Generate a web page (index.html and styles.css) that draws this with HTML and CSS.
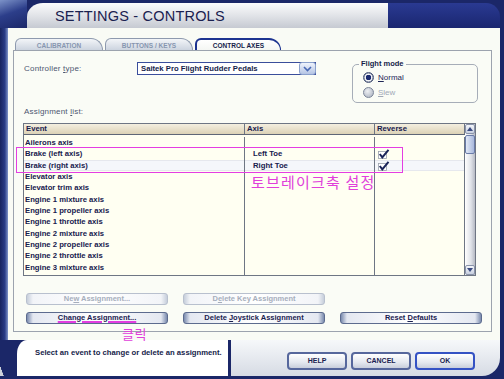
FILE: index.html
```html
<!DOCTYPE html>
<html lang="en">
<head>
    <meta charset="UTF-8">
    <title>Settings - Controls</title>
    <link rel="stylesheet" href="styles.css">
</head>
<body>
<div class="screen">

    <header class="head">
        <div class="head-left"></div>
        <div class="head-title"><h1>SETTINGS - CONTROLS</h1></div>
        <div class="head-right"></div>
    </header>

    <div class="middle">
        <div class="edge"></div>
        <main class="panel">
            <nav class="tabs">
                <div class="tab">CALIBRATION</div>
                <div class="tab">BUTTONS / KEYS</div>
                <div class="tab active">CONTROL AXES</div>
            </nav>

            <section class="box">
                <div class="top">
                    <label class="lbl ctl-lbl">Controller <u>t</u>ype:</label>
                    <div class="select">
                        <span>Saitek Pro Flight Rudder Pedals</span>
                        <div class="drop">
                            <svg width="9" height="6" viewBox="0 0 9 6"><path d="M1 1 L4.5 4.5 L8 1" fill="none" stroke="#4868b4" stroke-width="1.6"/></svg>
                        </div>
                    </div>
                    <div class="mode">
                        <span class="legend">Flight mode</span>
                        <div class="radio-row"><span class="radio on"></span><span><u>N</u>ormal</span></div>
                        <div class="radio-row dim"><span class="radio"></span><span><u>S</u>lew</span></div>
                    </div>
                </div>

                <div class="lbl list-lbl">Assignment <u>l</u>ist:</div>

                <div class="list">
                    <div class="list-main">
                        <div class="row head-row">
                            <div class="c">Event</div><div class="c">Axis</div><div class="c">Reverse</div>
                        </div>
                        <div class="rows">
                            <div class="row"><div class="c">Ailerons axis</div><div class="c"></div><div class="c"></div></div>
                            <div class="row"><div class="c">Brake (left axis)</div><div class="c ax">Left Toe</div><div class="c"><svg class="tick" width="12" height="10" viewBox="0 0 12 10"><rect x="0.5" y="2.5" width="8" height="7" fill="#fff" stroke="#9aa0ac" stroke-width="0.8"/><path d="M1.8 5 L4.3 8.3 L10.5 0.8" fill="none" stroke="#1a2458" stroke-width="2"/></svg></div></div>
                            <div class="row sel"><div class="c">Brake (right axis)</div><div class="c ax">Right Toe</div><div class="c"><svg class="tick" width="12" height="10" viewBox="0 0 12 10"><rect x="0.5" y="2.5" width="8" height="7" fill="#fff" stroke="#9aa0ac" stroke-width="0.8"/><path d="M1.8 5 L4.3 8.3 L10.5 0.8" fill="none" stroke="#1a2458" stroke-width="2"/></svg></div></div>
                            <div class="row"><div class="c">Elevator axis</div><div class="c"></div><div class="c"></div></div>
                            <div class="row"><div class="c">Elevator trim axis</div><div class="c"></div><div class="c"></div></div>
                            <div class="row"><div class="c">Engine 1 mixture axis</div><div class="c"></div><div class="c"></div></div>
                            <div class="row"><div class="c">Engine 1 propeller axis</div><div class="c"></div><div class="c"></div></div>
                            <div class="row"><div class="c">Engine 1 throttle axis</div><div class="c"></div><div class="c"></div></div>
                            <div class="row"><div class="c">Engine 2 mixture axis</div><div class="c"></div><div class="c"></div></div>
                            <div class="row"><div class="c">Engine 2 propeller axis</div><div class="c"></div><div class="c"></div></div>
                            <div class="row"><div class="c">Engine 2 throttle axis</div><div class="c"></div><div class="c"></div></div>
                            <div class="row"><div class="c">Engine 3 mixture axis</div><div class="c"></div><div class="c"></div></div>
                            <div class="row filler"><div class="c"></div><div class="c"></div><div class="c"></div></div>
                        </div>
                    </div>
                    <div class="scroll">
                        <div class="arrow"><svg width="6" height="4" viewBox="0 0 6 4"><path d="M0 4 L3 0 L6 4 Z" fill="#3a4a80"/></svg></div>
                        <div class="thumb"></div>
                        <div class="track"></div>
                        <div class="arrow"><svg width="6" height="4" viewBox="0 0 6 4"><path d="M0 0 L3 4 L6 0 Z" fill="#3a4a80"/></svg></div>
                    </div>
                </div>

                <div class="actions">
                    <div class="act-row">
                        <div class="btn off">Ne<u>w</u> Assignment...</div>
                        <div class="btn off">D<u>e</u>lete Key Assignment</div>
                    </div>
                    <div class="act-row">
                        <div class="btn"><span class="marked">Change Assignment...</span></div>
                        <div class="btn">Delete <u>J</u>oystick Assignment</div>
                        <div class="btn">Reset <u>D</u>efaults</div>
                    </div>
                </div>

                <div class="note-box"></div>
                <div class="note note-axis">토브레이크축 설정</div>
                <div class="note note-click">클릭</div>
            </section>
        </main>
        <div class="edge-r"></div>
    </div>

    <footer class="foot">
        <div class="foot-cap"></div>
        <div class="status">Select an event to change or delete an assignment.</div>
        <div class="foot-btns">
            <div class="fbtn">HELP</div>
            <div class="fbtn">CANCEL</div>
            <div class="fbtn ok">OK</div>
        </div>
    </footer>

</div>
</body>
</html>
```

FILE: styles.css
```css
* {
    margin: 0;
    padding: 0;
    box-sizing: border-box;
}

body {
    width: 504px;
    height: 379px;
    overflow: hidden;
    background: #1b2768;
    font-family: "Liberation Sans", Arial, sans-serif;
    color: #161d4a;
}

u {
    text-decoration-thickness: 1px;
    text-underline-offset: 1px;
}

.screen {
    display: flex;
    flex-direction: column;
    height: 379px;
}

/* title */
.head {
    display: flex;
    height: 28px;
    flex-shrink: 0;
}

.head-left {
    width: 27px;
    background: linear-gradient(160deg, #7c92c8, #2c3e8a 45%, #1b2768);
}

.head-title {
    width: 361px;
    margin-top: 3px;
    border-top-left-radius: 16px 14px;
    background: linear-gradient(#fbfbfc, #e4e6ea 45%, #c6cad2);
    display: flex;
    align-items: center;
    padding-left: 28px;
}

.head-title h1 {
    font-size: 14.5px;
    font-weight: normal;
    color: #1a2150;
    letter-spacing: 0.2px;
}

.head-right {
    flex: 1;
    margin-top: 3px;
    margin-right: 4px;
    background: linear-gradient(#2a3a92, #1a2670);
    border-top-right-radius: 14px;
}

/* main panel */
.middle {
    display: flex;
    height: 312px;
    flex-shrink: 0;
}

.edge {
    width: 8px;
    background: linear-gradient(to right, #18245e, #2a3c86 60%, #8095c8);
}

.edge-r {
    width: 4px;
    background: #1b2768;
}

.panel {
    flex: 1;
    background: #f9fbf5;
    padding: 10px 8px 0 5px;
}

.tabs {
    display: flex;
    gap: 2px;
    margin-left: 2px;
    height: 12px;
}

.tab {
    width: 88px;
    border: 1px solid #8e9aae;
    border-bottom: none;
    border-radius: 6px 12px 0 0;
    background: linear-gradient(#f3f5f8, #ccd4df);
    font-size: 6.5px;
    font-weight: bold;
    color: #8796b0;
    display: flex;
    align-items: center;
    justify-content: center;
    padding-top: 1px;
}

.tab.active {
    width: 86px;
    border-color: #1d3490;
    border-width: 2px 1px 0 2px;
    color: #161d4a;
    background: linear-gradient(#ffffff, #f4f6f3);
}

.box {
    position: relative;
    height: 282px;
    border: 1px solid #9ca3ae;
    background: #fafcf6;
}

.lbl {
    font-size: 8px;
    color: #4c5670;
    letter-spacing: 0.2px;
}

.top {
    display: flex;
    height: 52px;
    padding: 11px 13px 0 10px;
}

.ctl-lbl {
    width: 113px;
    height: 13px;
    line-height: 13px;
}

.select {
    display: flex;
    width: 179px;
    height: 13px;
    border: 1px solid #3a4e9c;
    background: #ffffff;
}

.select span {
    flex: 1;
    font-size: 7.7px;
    font-weight: bold;
    line-height: 11px;
    padding-left: 3px;
}

.select .drop {
    width: 17px;
    margin: -1px -1px -1px 0;
    border: 1px solid #8aa0cc;
    border-radius: 3px;
    background: linear-gradient(#f0f4fc, #b4c4e4);
    display: flex;
    align-items: center;
    justify-content: center;
}

.mode {
    position: relative;
    margin-left: auto;
    margin-top: 2px;
    width: 126px;
    height: 39px;
    border: 1px solid #a6adb8;
    border-radius: 5px;
    padding: 7px 0 0 10px;
    display: flex;
    flex-direction: column;
    gap: 4px;
}

.legend {
    position: absolute;
    left: 6px;
    top: -6px;
    padding: 0 2px;
    background: #fafcf6;
    font-size: 7.5px;
    font-weight: bold;
    line-height: 10px;
}

.radio-row {
    display: flex;
    align-items: center;
    gap: 4px;
    height: 11px;
    font-size: 8px;
    color: #1e2656;
}

.radio-row.dim {
    color: #a0a8b6;
}

.radio {
    width: 11px;
    height: 11px;
    border-radius: 50%;
    border: 1px solid #7a8498;
    background: radial-gradient(circle at 40% 35%, #eef0f4, #a6aebc);
}

.radio.on {
    border-color: #4a5678;
    background: radial-gradient(circle, #1b2a70 0 2.6px, #f0f2f6 3px 3.6px, #8a94aa 4.2px);
}

.list-lbl {
    margin: 4px 0 0 10px;
    line-height: 10px;
}

/* assignment list */
.list {
    display: flex;
    margin: 6px 0 0 9px;
    width: 453px;
    height: 153px;
    border: 1px solid #6e7684;
    background: #fffff2;
}

.list-main {
    flex: 1;
    display: flex;
    flex-direction: column;
}

.row {
    display: grid;
    grid-template-columns: 221px 130px 1fr;
    height: 11.35px;
    font-size: 7.7px;
    font-weight: bold;
    color: #18204e;
}

.row .c {
    border-right: 1px solid #6e7684;
    padding-left: 1px;
    line-height: 11px;
    white-space: nowrap;
}

.row .c.ax {
    padding-left: 8px;
}

.head-row {
    height: 11px;
    background: linear-gradient(#f4efe0, #dcd2b6);
    border-bottom: 1px solid #5e6676;
}

.head-row .c {
    line-height: 10px;
    padding-left: 2px;
}

.rows {
    flex: 1;
    display: flex;
    flex-direction: column;
    padding-top: 2px;
}

.row.sel {
    background: #f5f7fb;
    box-shadow: inset 0 1px 0 #e6e8ee, inset 0 -1px 0 #e6e8ee;
}

.row.filler {
    flex: 1;
}

.tick {
    display: block;
    margin: 1px 0 0 2px;
}

.scroll {
    width: 10px;
    display: flex;
    flex-direction: column;
    background: linear-gradient(to right, #ffffff, #dfe2e8 60%, #b6bac4);
}

.arrow {
    height: 10px;
    border: 1px solid #8a94aa;
    border-radius: 2px;
    background: linear-gradient(#f4f6fa, #c8d0e0);
    display: flex;
    align-items: center;
    justify-content: center;
}

.thumb {
    height: 19px;
    margin-top: 1px;
    border: 1px solid #6a7ca8;
    border-radius: 2px;
    background: linear-gradient(to right, #e2e9f6, #a8b8dc);
}

.track {
    flex: 1;
}

/* buttons */
.actions {
    display: flex;
    flex-direction: column;
    gap: 7px;
    margin: 17px 0 0 12px;
}

.act-row {
    display: flex;
    gap: 15px;
    height: 12px;
}

.btn {
    width: 142px;
    border: 1px solid #5c6b8e;
    border-radius: 3px;
    background: linear-gradient(to right, #7a8bae, #e4e8f1 6px, #ffffff 50%, #e4e8f1 calc(100% - 6px), #7a8bae);
    font-size: 7.5px;
    font-weight: bold;
    text-align: center;
    line-height: 10px;
    color: #1a2150;
}

.btn.off {
    border-color: #b8c0ce;
    color: #a6aebc;
    background: linear-gradient(to right, #c6cedb, #f2f4f8 6px, #ffffff 50%, #f2f4f8 calc(100% - 6px), #c6cedb);
}

.marked {
    text-decoration: underline;
    text-decoration-color: #e23ee0;
    text-decoration-thickness: 1.5px;
    text-underline-offset: 1px;
}

/* annotations drawn over the screenshot */
.note-box {
    position: absolute;
    left: 2px;
    top: 96px;
    width: 387px;
    height: 26px;
    border: 1.5px solid #e43ee2;
}

.note {
    position: absolute;
    font-family: "Noto Sans CJK KR", sans-serif;
    color: #e040da;
    line-height: 1;
}

.note-axis {
    left: 237px;
    top: 123px;
    font-size: 15px;
    letter-spacing: 1.2px;
}

.note-click {
    left: 108px;
    top: 276px;
    font-size: 13px;
    letter-spacing: 0.5px;
}

/* footer */
.foot {
    display: flex;
    flex: 1;
    padding-bottom: 3px;
}

.foot-cap {
    width: 17px;
    background: linear-gradient(70deg, #cdd1da 12%, #1b2768 13%);
}

.status {
    width: 214px;
    background: #ffffff;
    border-top-left-radius: 10px 14px;
    border-right: 3px solid #1b2768;
    padding: 8px 0 0 18px;
    font-size: 7.7px;
    font-weight: bold;
    line-height: 10px;
}

.foot-btns {
    flex: 1;
    display: flex;
    justify-content: flex-end;
    align-items: flex-start;
    gap: 4px;
    padding: 12px 25px 0 0;
    margin-right: 4px;
    background: linear-gradient(#f6f8fa, #d6dbe4);
    border-bottom-right-radius: 18px;
}

.fbtn {
    width: 60px;
    height: 18px;
    border: 2px solid #56679c;
    border-radius: 4px;
    background: linear-gradient(#ffffff, #e4e8ef 60%, #c8cedb);
    font-size: 7px;
    font-weight: bold;
    line-height: 14px;
    text-align: center;
    color: #1a2150;
}

.fbtn.ok {
    border-color: #3452c4;
}
```
